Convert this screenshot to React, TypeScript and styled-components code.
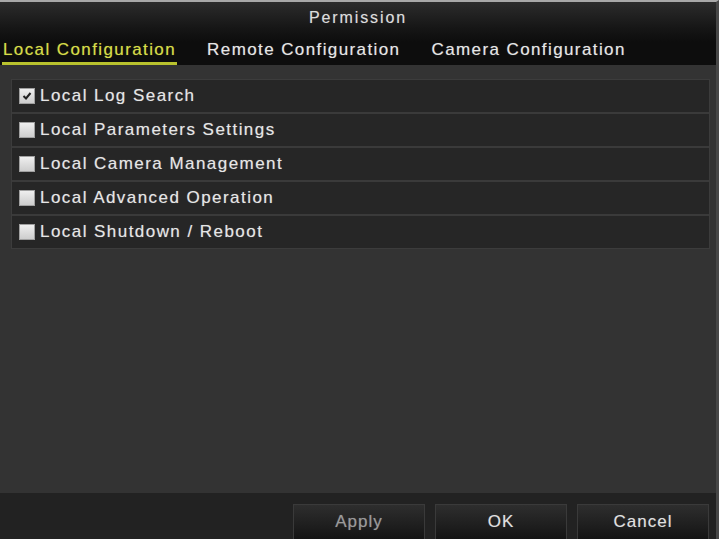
import React, { useState } from 'react';
import styled, { createGlobalStyle } from 'styled-components';

const GlobalStyle = createGlobalStyle`
  html, body {
    margin: 0;
    padding: 0;
    background: #1c1c1c;
  }
  * {
    box-sizing: border-box;
  }
`;

const Frame = styled.div`
  width: 719px;
  height: 539px;
  display: flex;
  flex-direction: column;
  background: #333333;
  border-top: 2px solid #a8a8a8;
  border-right: 3px solid #474747;
  font-family: 'Liberation Sans', Arial, sans-serif;
  overflow: hidden;
`;

const Header = styled.div`
  height: 63px;
  display: flex;
  flex-direction: column;
  background: linear-gradient(to bottom, #2c2c2c 0px, #161616 26px, #0d0d0d 40px, #0d0d0d 100%);
`;

const Title = styled.div`
  height: 32px;
  display: flex;
  align-items: center;
  justify-content: center;
  color: #dcdcdc;
  font-size: 16px;
  letter-spacing: 1.9px;
  padding-bottom: 1px;
  text-shadow: 0 0 1px rgba(255, 255, 255, 0.35);
`;

const Tabs = styled.div`
  flex: 1;
  display: flex;
  align-items: flex-end;
  gap: 29px;
  padding-left: 2px;
`;

const Tab = styled.div<{ $active?: boolean }>`
  height: 100%;
  display: flex;
  align-items: center;
  padding: 3px 1px 0;
  font-size: 17px;
  letter-spacing: 1.4px;
  color: ${(p) => (p.$active ? '#d6dc48' : '#e6e6e6')};
  border-bottom: 3px solid ${(p) => (p.$active ? '#b9c22e' : 'transparent')};
  text-shadow: 0 0 1px ${(p) => (p.$active ? 'rgba(214, 220, 72, 0.5)' : 'rgba(255, 255, 255, 0.4)')};
  cursor: pointer;
`;

const Content = styled.div`
  flex: 1;
  padding: 14px 6px 0 11px;
`;

const List = styled.div`
  display: flex;
  flex-direction: column;
  border: 1px solid #3c3c3c;
  background: #3a3a3a;
  gap: 2px;
`;

const Row = styled.label`
  height: 32px;
  display: flex;
  align-items: center;
  gap: 5px;
  padding-left: 7px;
  background: #262626;
  color: #e6e6e6;
  font-size: 17px;
  letter-spacing: 1.45px;
  text-shadow: 0 0 1px rgba(255, 255, 255, 0.4);
  cursor: pointer;
`;

const Box = styled.span<{ $checked?: boolean }>`
  width: 16px;
  height: 16px;
  flex-shrink: 0;
  background: linear-gradient(to bottom, #efefef, #cdcdcd);
  border: 1px solid #a0a0a0;
  display: flex;
  align-items: center;
  justify-content: center;
`;

const Footer = styled.div`
  height: 46px;
  display: flex;
  justify-content: flex-end;
  align-items: flex-end;
  gap: 10px;
  padding-right: 7px;
  background: #222222;
`;

const Button = styled.button<{ $disabled?: boolean }>`
  width: 132px;
  height: 35px;
  border: 1px solid #3a3a3a;
  border-bottom: none;
  background: linear-gradient(to bottom, #2e2e2e, #141414);
  color: ${(p) => (p.$disabled ? '#9a9a9a' : '#e0e0e0')};
  font-family: 'Liberation Sans', Arial, sans-serif;
  font-size: 17px;
  letter-spacing: 1px;
  padding-top: 1px;
  text-shadow: 0 0 1px rgba(255, 255, 255, 0.3);
  cursor: pointer;
`;

const permissions = [
  'Local Log Search',
  'Local Parameters Settings',
  'Local Camera Management',
  'Local Advanced Operation',
  'Local Shutdown / Reboot',
];

const tabs = ['Local Configuration', 'Remote Configuration', 'Camera Configuration'];

const Check = () => (
  <svg width="10" height="10" viewBox="0 0 10 10">
    <path d="M1.5 5 L4 7.5 L8.5 2" stroke="#222" strokeWidth="2" fill="none" />
  </svg>
);

const App = () => {
  const [tab, setTab] = useState(0);
  const [checked, setChecked] = useState<boolean[]>([true, false, false, false, false]);

  const toggle = (i: number) => {
    setChecked((prev) => prev.map((v, j) => (j === i ? !v : v)));
  };

  return (
    <>
      <GlobalStyle />
      <Frame>
        <Header>
          <Title>Permission</Title>
          <Tabs>
            {tabs.map((t, i) => (
              <Tab key={t} $active={i === tab} onClick={() => setTab(i)}>
                {t}
              </Tab>
            ))}
          </Tabs>
        </Header>
        <Content>
          <List>
            {permissions.map((p, i) => (
              <Row key={p} onClick={() => toggle(i)}>
                <Box $checked={checked[i]}>{checked[i] && <Check />}</Box>
                {p}
              </Row>
            ))}
          </List>
        </Content>
        <Footer>
          <Button $disabled>Apply</Button>
          <Button>OK</Button>
          <Button>Cancel</Button>
        </Footer>
      </Frame>
    </>
  );
};

export default App;
